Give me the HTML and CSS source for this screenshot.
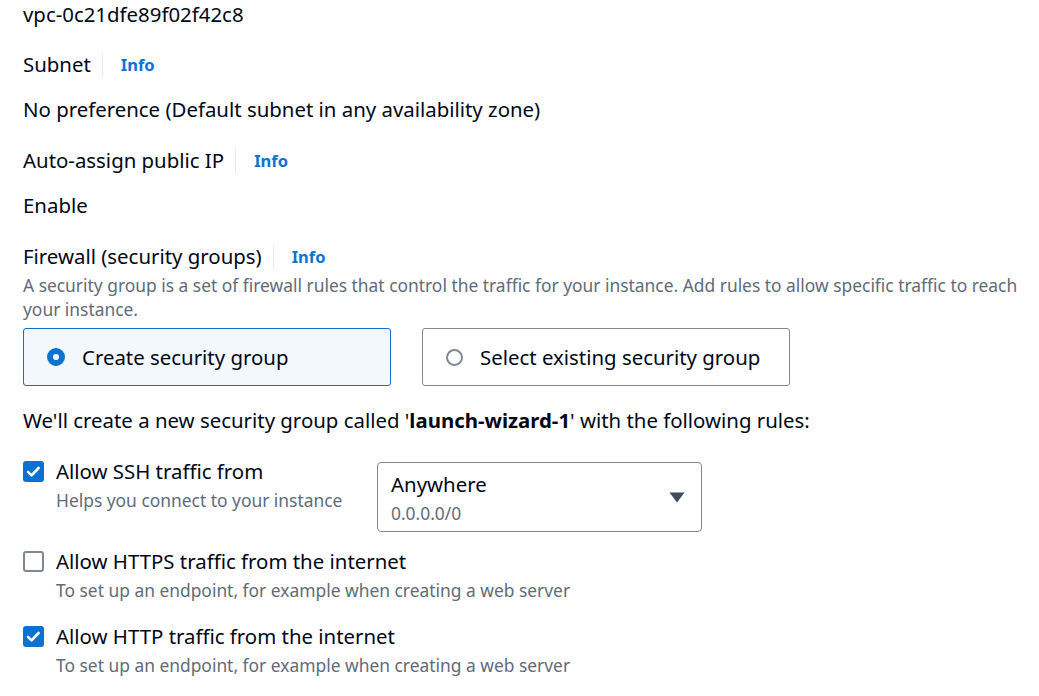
FILE: index.html
```html
<!DOCTYPE html>
<html lang="en">
<head>
<meta charset="utf-8">
<link rel="stylesheet" href="styles.css">
</head>
<body>
<div class="page">
  <div class="value vpc">vpc-0c21dfe89f02f42c8</div>

  <div class="label-row lr-subnet"><span class="label">Subnet</span><span class="divider"></span><a class="info">Info</a></div>
  <div class="value v-subnet">No preference (Default subnet in any availability zone)</div>

  <div class="label-row lr-ip"><span class="label">Auto-assign public IP</span><span class="divider"></span><a class="info">Info</a></div>
  <div class="value v-ip">Enable</div>

  <div class="label-row lr-fw"><span class="label">Firewall (security groups)</span><span class="divider"></span><a class="info">Info</a></div>
  <p class="desc fw-desc">A security group is a set of firewall rules that control the traffic for your instance. Add rules to allow specific traffic to reach your instance.</p>

  <div class="tiles">
    <div class="tile selected"><span class="radio on"></span><span class="tile-text">Create security group</span></div>
    <div class="tile"><span class="radio"></span><span class="tile-text">Select existing security group</span></div>
  </div>

  <div class="value notice">We'll create a new security group called '<b>launch-wizard-1</b>' with the following rules:</div>

  <div class="rule rule-ssh">
    <div class="rule-left fixed">
      <div class="check-row">
        <span class="checkbox on"><svg viewBox="0 0 21 21" width="21" height="21"><path d="M5 10.8l3.6 3.6 7-7.4" fill="none" stroke="#fff" stroke-width="2.6" stroke-linecap="round" stroke-linejoin="round"/></svg></span>
        <span class="check-label">Allow SSH traffic from</span>
      </div>
      <div class="desc rule-desc">Helps you connect to your instance</div>
    </div>
    <div class="select">
      <div class="select-text">
        <div class="select-value">Anywhere</div>
        <div class="select-sub">0.0.0.0/0</div>
      </div>
      <svg class="caret" viewBox="0 0 16 11" width="16" height="11"><path d="M0.5 0.5h15l-7.5 10z" fill="#414d5c"/></svg>
    </div>
  </div>

  <div class="rule rule-https">
    <div class="rule-left">
      <div class="check-row">
        <span class="checkbox"></span>
        <span class="check-label">Allow HTTPS traffic from the internet</span>
      </div>
      <div class="desc rule-desc">To set up an endpoint, for example when creating a web server</div>
    </div>
  </div>

  <div class="rule rule-http">
    <div class="rule-left">
      <div class="check-row">
        <span class="checkbox on"><svg viewBox="0 0 21 21" width="21" height="21"><path d="M5 10.8l3.6 3.6 7-7.4" fill="none" stroke="#fff" stroke-width="2.6" stroke-linecap="round" stroke-linejoin="round"/></svg></span>
        <span class="check-label">Allow HTTP traffic from the internet</span>
      </div>
      <div class="desc rule-desc">To set up an endpoint, for example when creating a web server</div>
    </div>
  </div>
</div>
</body>
</html>
```

FILE: styles.css
```css
html, body {
  margin: 0;
  padding: 0;
  background: #ffffff;
}
body {
  font-family: "Noto Sans", "Open Sans", sans-serif;
  font-size: 20.4px;
  line-height: 25px;
  color: #000716;
}
.page {
  padding: 2px 0 0 23px;
  width: 1005px;
}
.value { margin: 0; }
.label-row {
  display: flex;
  align-items: center;
  height: 25px;
}
.label { padding-right: 11px; }
.divider {
  width: 1px;
  height: 25px;
  background: #e9ebed;
}
.info {
  padding-left: 18px;
  color: #0972d3;
  font-weight: 700;
  font-size: 16.5px;
}
.lr-subnet { margin-top: 25px; }
.v-subnet { margin-top: 20px; }
.lr-ip { margin-top: 26px; }
.v-ip { margin-top: 20px; }
.lr-fw { margin-top: 26px; }
.desc {
  color: #5f6b7a;
  font-size: 17.4px;
  line-height: 24px;
}
.fw-desc { margin: 4px 0 0 0; }
.tiles {
  display: flex;
  gap: 31px;
  margin-top: 7px;
}
.tile {
  box-sizing: border-box;
  width: 368px;
  height: 58px;
  border: 1px solid #7d8998;
  border-radius: 3px;
  display: flex;
  align-items: center;
  padding-left: 23px;
  gap: 17px;
}
.tile.selected {
  border-color: #0972d3;
  background: #f2f8fd;
}
.radio {
  box-sizing: border-box;
  width: 17px;
  height: 17px;
  border-radius: 50%;
  border: 2px solid #7d8998;
  flex: none;
}
.radio.on {
  width: 18px;
  height: 18px;
  border: 6px solid #0972d3;
  background: #ffffff;
}
.notice { margin-top: 22px; }
.notice b { font-weight: 700; }
.rule {
  display: flex;
  align-items: flex-start;
}
.rule-left.fixed { width: 354px; flex: none; }
.check-row {
  display: flex;
  align-items: center;
  gap: 12px;
}
.checkbox {
  box-sizing: border-box;
  width: 21px;
  height: 21px;
  border-radius: 3px;
  border: 2px solid #7d8998;
  flex: none;
  display: flex;
}
.checkbox.on {
  border: none;
  background: #0972d3;
}
.rule-desc { margin-left: 33px; margin-top: 4px; }
.rule-ssh { margin-top: 26px; }
.rule-https { margin-top: 17px; }
.rule-http { margin-top: 22px; }
.select {
  box-sizing: border-box;
  margin-top: 3px;
  width: 325px;
  height: 70px;
  border: 1px solid #7d8998;
  border-radius: 4px;
  display: flex;
  align-items: flex-start;
  justify-content: space-between;
  padding: 9px 16px 0 13px;
}
.select-sub {
  color: #5f6b7a;
  font-size: 17.4px;
  line-height: 24px;
  margin-top: 4px;
}
.caret { margin-top: 20px; }
```
